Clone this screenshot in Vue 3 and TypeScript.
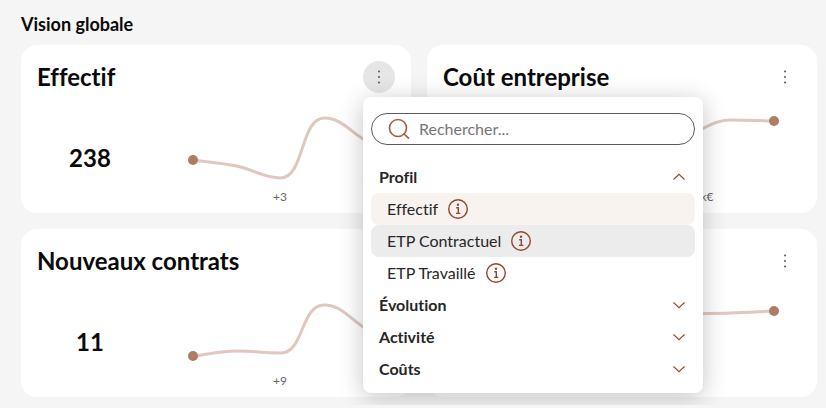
<script setup lang="ts">
import { computed, ref } from 'vue'

interface Indicator {
  title: string
  value: string
  delta: string
  points: number[]
}

interface Section {
  name: string
  items: string[]
}

const STEP = 43.75
const START_X = 7

const indicators: Indicator[] = [
  { title: 'Effectif', value: '238', delta: '+3', points: [67, 73, 85, 25, 49] },
  { title: 'Coût entreprise', value: '1,2M€', delta: '-118,42k€', points: [67, 58, 43, 27, 28] },
  { title: 'Nouveaux contrats', value: '11', delta: '+9', points: [79, 74, 76, 28, 53] },
  { title: 'Absences', value: '51', delta: '-1,19k', points: [50, 45, 37, 36, 34] },
]

const sections: Section[] = [
  { name: 'Profil', items: ['Effectif', 'ETP Contractuel', 'ETP Travaillé'] },
  { name: 'Évolution', items: ['Entrées', 'Sorties'] },
  { name: 'Activité', items: ['Absences', 'Heures travaillées'] },
  { name: 'Coûts', items: ['Coût entreprise', 'Salaire brut'] },
]

const query = ref('')
const openMenu = ref<number | null>(0)
const openSection = ref('Profil')
const selected = ref('Effectif')
const highlighted = ref('ETP Contractuel')

const visibleSections = computed(() => {
  const q = query.value.trim().toLowerCase()
  return sections
    .map((s) => ({
      name: s.name,
      items: q
        ? s.items.filter((i) => i.toLowerCase().includes(q))
        : s.name === openSection.value ? s.items : [],
    }))
    .filter((s) => !q || s.items.length > 0)
})

function toggleMenu(index: number) {
  openMenu.value = openMenu.value === index ? null : index
}

function toggleSection(name: string) {
  openSection.value = openSection.value === name ? '' : name
}

// Smooth curve whose tangents are flat at every local minimum and maximum;
// segments between two flat points get longer handles, so they rise faster.
function curve(ys: number[]): string {
  const slopes = ys.slice(1).map((y, i) => (y - ys[i]) / STEP)
  const last = ys.length - 1
  const t = ys.map((_, i) => {
    if (i === 0) return slopes[0]
    if (i === last) return slopes[last - 1]
    const a = slopes[i - 1]
    const b = slopes[i]
    return (Math.sign(a) + Math.sign(b)) * Math.min(Math.abs(a), Math.abs(b), Math.abs(a + b) / 4)
  })
  let d = `M${START_X},${ys[0]}`
  for (let i = 1; i <= last; i++) {
    const x0 = START_X + STEP * (i - 1)
    const x1 = x0 + STEP
    const h = STEP * (t[i - 1] === 0 && t[i] === 0 ? 0.55 : 0.4)
    d += `C${x0 + h},${ys[i - 1] + t[i - 1] * h} ${x1 - h},${ys[i] - t[i] * h} ${x1},${ys[i]}`
  }
  return d
}
</script>

<template>
  <main class="page">
    <h1 class="page-title">Vision globale</h1>
    <div class="grid">
      <section v-for="(card, index) in indicators" :key="card.title" class="card">
        <header class="card-head">
          <h2 class="card-title">{{ card.title }}</h2>
          <div class="menu">
            <button
              type="button"
              class="menu-button"
              :class="{ active: openMenu === index }"
              :aria-expanded="openMenu === index"
              aria-label="Changer d’indicateur"
              @click="toggleMenu(index)"
            >
              <svg width="16" height="16" viewBox="0 0 16 16" aria-hidden="true">
                <circle cx="8" cy="2.5" r="1" />
                <circle cx="8" cy="8" r="1" />
                <circle cx="8" cy="13.5" r="1" />
              </svg>
            </button>

            <div v-if="openMenu === index" class="popover">
              <label class="search">
                <svg width="24" height="24" viewBox="0 0 24 24" aria-hidden="true">
                  <circle cx="11" cy="11" r="8.5" />
                  <path d="M17 17l4.500 4.200" />
                </svg>
                <input
                  v-model="query"
                  type="text"
                  placeholder="Rechercher..."
                  aria-label="Rechercher un indicateur"
                />
              </label>

              <template v-for="section in visibleSections" :key="section.name">
                <button
                  type="button"
                  class="section"
                  :aria-expanded="section.items.length > 0"
                  @click="toggleSection(section.name)"
                >
                  <span>{{ section.name }}</span>
                  <svg
                    class="chevron"
                    :class="{ up: section.items.length > 0 }"
                    width="16"
                    height="16"
                    viewBox="0 0 16 16"
                    aria-hidden="true"
                  >
                    <path d="M2.500 5.500L8 10.700L13.500 5.500" />
                  </svg>
                </button>
                <button
                  v-for="item in section.items"
                  :key="item"
                  type="button"
                  class="item"
                  :class="{ selected: selected === item, highlighted: highlighted === item }"
                  @click="selected = item"
                  @mouseenter="highlighted = item"
                >
                  <span>{{ item }}</span>
                  <svg class="info" width="20" height="20" viewBox="0 0 20 20" aria-hidden="true">
                    <circle class="ring" cx="10" cy="10" r="9.300" />
                    <circle class="dot" cx="10" cy="5.700" r="1.200" />
                    <path d="M8.200 8.700H10.300V14.300M8 14.400H12.300" />
                  </svg>
                </button>
              </template>
            </div>
          </div>
        </header>

        <div class="card-body">
          <strong class="value">{{ card.value }}</strong>
          <figure class="trend">
            <svg width="188" height="94" viewBox="0 0 188 94" aria-hidden="true">
              <path :d="curve(card.points)" />
              <circle :cx="START_X" :cy="card.points[0]" r="5" />
              <circle :cx="START_X + STEP * 4" :cy="card.points[4]" r="5" />
            </svg>
            <figcaption>{{ card.delta }}</figcaption>
          </figure>
        </div>
      </section>
    </div>
  </main>
</template>

<style>
body {
  margin: 0;
  background: #f5f5f5;
}
</style>

<style scoped>
.page {
  box-sizing: border-box;
  padding: 12px 9px 8px 21px;
  font-family: Lato, "Liberation Sans", sans-serif;
  font-variant-ligatures: none;
  color: #0a0a0a;
}

.page-title {
  margin: 0 0 9px;
  font-size: 18px;
  line-height: 24px;
  font-weight: 700;
}

.grid {
  display: grid;
  grid-template-columns: repeat(2, minmax(0, 1fr));
  gap: 16px;
}

.card {
  padding: 16px;
  border-radius: 16px;
  background: #fff;
}

.card-head {
  display: flex;
  align-items: center;
  justify-content: space-between;
}

.card-title {
  margin: 0;
  font-size: 24px;
  line-height: 32px;
  font-weight: 700;
}

.menu {
  position: relative;
}

button {
  margin: 0;
  border: 0;
  background: none;
  font: inherit;
  font-variant-ligatures: none;
  color: inherit;
  cursor: pointer;
}

.menu-button {
  display: flex;
  align-items: center;
  justify-content: center;
  width: 32px;
  height: 32px;
  padding: 0;
  border-radius: 50%;
}

.menu-button svg {
  fill: #555;
}

.menu-button.active {
  background: #e6e6e6;
}

.popover {
  position: absolute;
  z-index: 10;
  top: 36px;
  left: 0;
  box-sizing: border-box;
  width: 340px;
  padding: 16px 8px 8px;
  border-radius: 8px;
  background: #fff;
  box-shadow: 0 4px 24px rgba(0, 0, 0, 0.24);
  color: #262626;
  font-size: 16px;
  line-height: 24px;
}

.search {
  display: flex;
  align-items: center;
  gap: 8px;
  box-sizing: border-box;
  height: 32px;
  margin-bottom: 16px;
  padding: 0 15px;
  border: 1px solid #5c5c5c;
  border-radius: 16px;
}

.search svg {
  flex: none;
  fill: none;
  stroke: #a35d44;
  stroke-width: 1.6;
  stroke-linecap: round;
}

.search input {
  flex: 1;
  min-width: 0;
  padding: 0;
  border: 0;
  outline: 0;
  background: none;
  font: inherit;
  color: inherit;
}

.search input::placeholder {
  color: #757575;
}

.section {
  display: flex;
  align-items: center;
  justify-content: space-between;
  width: 100%;
  height: 32px;
  padding: 0 8px;
  font-weight: 700;
}

.chevron {
  fill: none;
  stroke: #95452b;
  stroke-width: 1.1;
}

.chevron.up {
  transform: rotate(180deg);
}

.item {
  display: flex;
  align-items: center;
  gap: 10px;
  width: 100%;
  height: 32px;
  padding: 0 16px;
  border-radius: 8px;
}

.item.selected {
  background: #f9f3f0;
}

.item.highlighted {
  background: #ececec;
}

.info {
  fill: none;
  stroke: #95452b;
  stroke-width: 1.4;
}

.info .dot {
  fill: #95452b;
  stroke: none;
}

.card-body {
  display: grid;
  grid-template-columns: 106px 1fr;
  column-gap: 22px;
  align-items: center;
}

.value {
  padding-top: 26px;
  font-size: 24px;
  line-height: 32px;
  font-weight: 700;
  text-align: center;
}

.trend {
  display: flex;
  flex-direction: column;
  align-items: center;
  height: 104px;
  margin: 0;
}

.trend svg {
  display: block;
  flex: none;
}

.trend path {
  fill: none;
  stroke: #dec8bf;
  stroke-width: 3;
}

.trend circle {
  fill: #b07c65;
}

.trend figcaption {
  font-size: 12px;
  line-height: 20px;
  color: #666;
}
</style>
